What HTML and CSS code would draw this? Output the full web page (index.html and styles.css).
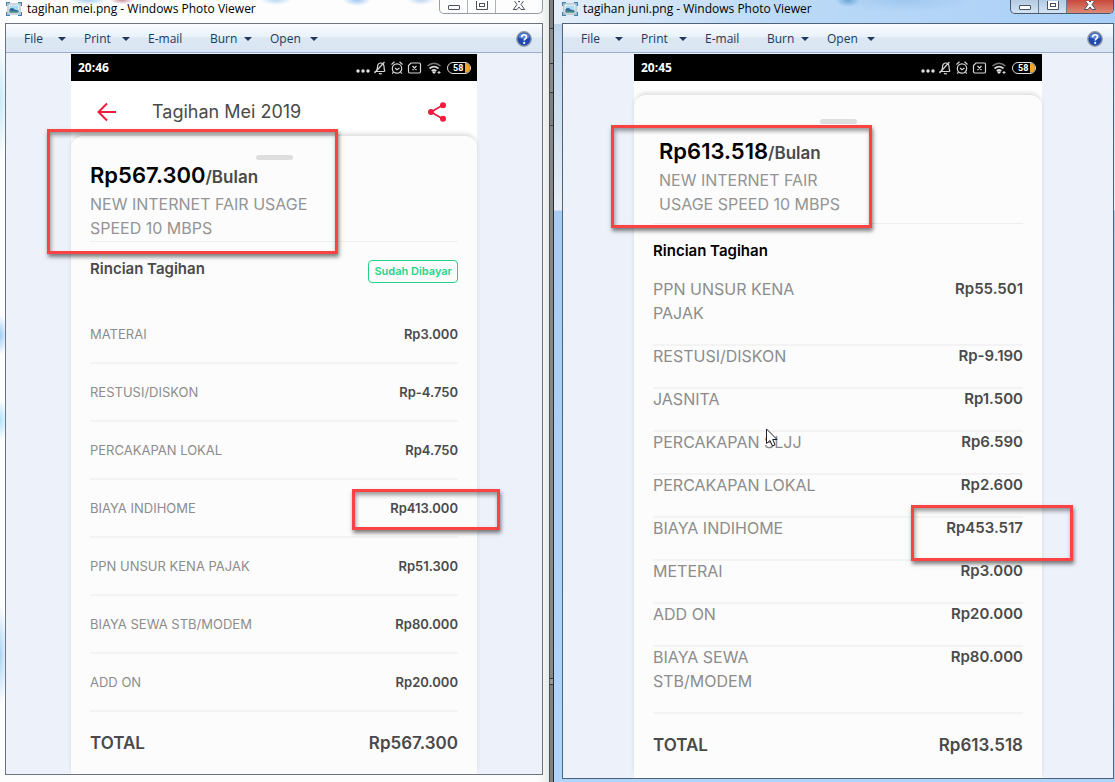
FILE: index.html
```html
<!DOCTYPE html>
<html lang="id">
<head>
<meta charset="utf-8">
<title>Windows Photo Viewer</title>
<link rel="stylesheet" href="styles.css">
</head>
<body>
<svg class="defs" aria-hidden="true">
  <symbol id="photo" viewBox="0 0 16 14">
    <path d="M.5 4V.5H4M12 .5h3.500V4M15.500 10v3.500H12M4 13.500H.5V10" fill="none" stroke="#3d82b5" stroke-width="1.400"/>
    <rect x="2" y="2" width="12" height="10" fill="#fff" stroke="#8494a3" stroke-width=".8"/>
    <rect x="3.500" y="3.500" width="9" height="7" fill="#a9d8f3"/>
    <path d="M3.500 7q3-2 5 .5l4 1v2h-9z" fill="#31699a"/>
    <path d="M3.500 9l9 .5v1h-9z" fill="#4d9a75"/>
  </symbol>
  <symbol id="help" viewBox="0 0 16 16">
    <circle cx="8" cy="8" r="7.200" fill="#2148ad" stroke="#8f98a6" stroke-width="1.400"/>
    <path d="M2.500 6.500a5.700 5.700 0 0 1 11 0q-5 2.500-11 0z" fill="#5e8ae0"/>
    <path d="M5.700 6.200c0-3.300 4.800-3.100 4.800-.2 0 1.700-2.300 1.700-2.300 3.600" fill="none" stroke="#fff" stroke-width="1.600"/>
    <circle cx="8.200" cy="11.900" r="1.100" fill="#fff"/>
  </symbol>
  <symbol id="min" viewBox="0 0 14 12"><rect x="1.500" y="4.500" width="11" height="4" rx=".5" fill="#fff" stroke="#4a5262"/></symbol>
  <symbol id="max" viewBox="0 0 14 12"><path d="M1.500-1h11v9.500h-11z" fill="#fff" stroke="#4a5262"/><rect x="4.500" y="2.500" width="5" height="3" fill="#fff" stroke="#4a5262"/></symbol>
  <symbol id="close" viewBox="0 0 14 12"><path d="M1.500-1.500h3.500L7 1.200 9-1.500h3.500L9 3.500l3.700 5H9L7 6 5 8.500H1.300L5 3.500z" fill="#fff" stroke="#4a5262"/></symbol>
  <symbol id="status" viewBox="0 0 88 16">
    <g fill="#e4e4e4"><circle cx="3" cy="11" r="1.700"/><circle cx="8" cy="11" r="1.700"/><circle cx="13" cy="11" r="1.700"/></g>
    <g fill="none" stroke="#d6d6d6" stroke-width="1.200">
      <path d="M19.500 11.500h10M21 11q1.500-1 1.500-4 0-4 3.500-4 2.500 0 3 3 0 4 1 5.500M24 13.300q1.500 1.300 2.800 0M19.500 13L29.500 2"/>
      <circle cx="42" cy="8.500" r="4.700"/><path d="M36.500 4.500l3-2.700M47.500 4.500l-3-2.700M40 8l2 1.700L44.500 8M38.500 12l-1.300 1.700M45.500 12l1.300 1.700"/>
      <path d="M56 3h8.300q1.200 0 1.200 1.200v7.600q0 1.200-1.200 1.200H54.700q-1.200 0-1.200-1.200V5.500zM57.500 6l4 4M61.500 6l-4 4"/>
      <path d="M72.500 6q6.500-5.500 13 0" stroke="#777" stroke-width="1.600"/><path d="M74.500 8.500q4.500-3.800 9 0M76.700 11q2.300-2 4.600 0" stroke-width="1.700"/>
      <path d="M84 11v3M82.500 12.500h3" stroke-width="1"/>
    </g>
    <path d="M79 14l-2-2q2-1.500 4 0z" fill="#e4e4e4"/>
  </symbol>
</svg>

<main class="desktop">
  <section class="window window-back">
    <header class="titlebar">
      <svg class="app-icon"><use href="#photo"/></svg>
      <h1>tagihan mei.png - Windows Photo Viewer</h1>
      <div class="controls">
        <button aria-label="Minimize"><svg><use href="#min"/></svg></button>
        <button aria-label="Maximize"><svg><use href="#max"/></svg></button>
        <button class="close" aria-label="Close"><svg><use href="#close"/></svg></button>
      </div>
    </header>
    <div class="viewer">
      <nav class="toolbar">
        <button class="drop">File</button><button class="drop">Print</button><button class="plain">E-mail</button><button class="drop">Burn</button><button class="drop">Open</button>
        <button class="help" aria-label="Help"><svg><use href="#help"/></svg></button>
      </nav>
      <div class="stage">
        <article class="phone mei">
          <div class="statusbar"><time>20:46</time><svg><use href="#status"/></svg><span class="battery">58</span></div>
          <div class="appbar">
            <button aria-label="Kembali"><svg viewBox="0 0 20 20"><path d="M19 10H2M10 1.500L1.500 10l8.500 8.500" fill="none" stroke="#ee1c3b" stroke-width="2"/></svg></button>
            <h2>Tagihan Mei 2019</h2>
            <button aria-label="Bagikan"><svg viewBox="0 0 20 20"><path d="M16 3L4 10l12 7" fill="none" stroke="#ee1c3b" stroke-width="1.700"/><g fill="#ee1c3b"><circle cx="16" cy="3.200" r="3"/><circle cx="4" cy="10" r="3"/><circle cx="16" cy="16.800" r="3"/></g></svg></button>
          </div>
          <div class="card">
            <div class="handle"></div>
            <div class="plan">
              <p class="price"><strong>Rp567.300</strong>/Bulan</p>
              <p class="package">NEW INTERNET FAIR USAGE SPEED 10 MBPS</p>
              <i class="mark mark-plan"></i>
            </div>
            <div class="detail-head"><h3>Rincian Tagihan</h3><span class="badge">Sudah Dibayar</span></div>
            <dl class="bill">
              <div><dt>MATERAI</dt><dd>Rp3.000</dd></div>
              <div><dt>RESTUSI/DISKON</dt><dd>Rp-4.750</dd></div>
              <div><dt>PERCAKAPAN LOKAL</dt><dd>Rp4.750</dd></div>
              <div><dt>BIAYA INDIHOME</dt><dd>Rp413.000</dd><i class="mark mark-row"></i></div>
              <div><dt>PPN UNSUR KENA PAJAK</dt><dd>Rp51.300</dd></div>
              <div><dt>BIAYA SEWA STB/MODEM</dt><dd>Rp80.000</dd></div>
              <div><dt>ADD ON</dt><dd>Rp20.000</dd></div>
              <div class="total"><dt>TOTAL</dt><dd>Rp567.300</dd></div>
            </dl>
          </div>
        </article>
      </div>
    </div>
  </section>

  <div class="gap"></div>

  <section class="window window-front">
    <header class="titlebar">
      <svg class="app-icon"><use href="#photo"/></svg>
      <h1>tagihan juni.png - Windows Photo Viewer</h1>
      <div class="controls">
        <button aria-label="Minimize"><svg><use href="#min"/></svg></button>
        <button aria-label="Maximize"><svg><use href="#max"/></svg></button>
        <button class="close" aria-label="Close"><svg><use href="#close"/></svg></button>
      </div>
    </header>
    <div class="viewer">
      <nav class="toolbar">
        <button class="drop">File</button><button class="drop">Print</button><button class="plain">E-mail</button><button class="drop">Burn</button><button class="drop">Open</button>
        <button class="help" aria-label="Help"><svg><use href="#help"/></svg></button>
      </nav>
      <div class="stage">
        <article class="phone juni">
          <div class="statusbar"><time>20:45</time><svg><use href="#status"/></svg><span class="battery">58</span></div>
          <div class="card">
            <div class="handle"></div>
            <div class="plan">
              <p class="price"><strong>Rp613.518</strong>/Bulan</p>
              <p class="package">NEW INTERNET FAIR USAGE SPEED 10 MBPS</p>
              <i class="mark mark-plan"></i>
            </div>
            <div class="detail-head"><h3>Rincian Tagihan</h3></div>
            <dl class="bill">
              <div><dt>PPN UNSUR KENA PAJAK</dt><dd>Rp55.501</dd></div>
              <div><dt>RESTUSI/DISKON</dt><dd>Rp-9.190</dd></div>
              <div><dt>JASNITA</dt><dd>Rp1.500</dd></div>
              <div><dt>PERCAKAPAN SLJJ</dt><dd>Rp6.590</dd>
                <svg class="cursor" viewBox="0 0 12 19"><path d="M.5 1v14.500l3.500-3 2.500 5.500 2.500-1.200L6.700 11.500H11z" fill="#fff" stroke="#1b1b2b"/></svg></div>
              <div><dt>PERCAKAPAN LOKAL</dt><dd>Rp2.600</dd></div>
              <div><dt>BIAYA INDIHOME</dt><dd>Rp453.517</dd><i class="mark mark-row"></i></div>
              <div><dt>METERAI</dt><dd>Rp3.000</dd></div>
              <div><dt>ADD ON</dt><dd>Rp20.000</dd></div>
              <div><dt>BIAYA SEWA STB/MODEM</dt><dd>Rp80.000</dd></div>
              <div class="total"><dt>TOTAL</dt><dd>Rp613.518</dd></div>
            </dl>
          </div>
        </article>
      </div>
    </div>
  </section>
</main>
</body>
</html>
```
FILE: styles.css
```css
* { box-sizing: border-box; }
body, h1, h2, h3, p, dl, dd { margin: 0; }
body { font-family: Inter, "Noto Sans", sans-serif; background: #fff; }
button { border: 0; padding: 0; background: none; font: inherit; color: inherit; }
.defs { position: absolute; width: 0; height: 0; }

.desktop { display: grid; grid-template-columns: 549fr 5px 561fr; min-height: 100vh; overflow: hidden; }
.gap {
  border-left: 1px solid #555;
  border-right: 1px solid #222a33;
  background: linear-gradient(#808080 0 28px, #333 28px 29px, #8b8b8b 29px 63px, #333 63px 64px, #8a8a8a 64px 92px, #333 92px 93px, #7b8085 93px 125px, #444 125px 126px, #858585 126px 678px, #333 678px 679px, #999 679px 684px, #333 684px 685px, #808080 685px);
}

.window { display: flex; flex-direction: column; min-width: 0; }
.window-back {
  padding: 0 6px 8px 5px;
  background:
    radial-gradient(ellipse 20px 5px at 88px 0, #a9cfee, transparent),
    radial-gradient(ellipse 12px 4px at 122px 0, #c98c9a, transparent),
    radial-gradient(ellipse 16px 5px at 276px 0, #bcd6f2, transparent),
    radial-gradient(ellipse 14px 6px at 357px 0, #9fc8f2, transparent),
    radial-gradient(ellipse 14px 5px at 421px 0, #bdd5f2, transparent),
    radial-gradient(ellipse 8px 20px at 0 335px, #9ccdf5, transparent),
    radial-gradient(ellipse 8px 60px at 0 100px, #c6e9f8, transparent),
    radial-gradient(ellipse 8px 20px at 0 420px, #aee3fa, transparent),
    radial-gradient(ellipse 8px 50px at 0 655px, #a9d4f3, transparent),
    linear-gradient(90deg, #fdfdfd 98%, #e8eaea);
}
.window-front {
  padding: 0 1px 4px 8px;
  background:
    radial-gradient(ellipse 12px 7px at 294px 0, #6aa7d8, transparent),
    radial-gradient(ellipse 70px 12px at 350px 0, #9fc8ef, transparent),
    linear-gradient(90deg, #e4eef9, #bcdaf7 40%, #a9cff7) 0 0 / 100% 24px no-repeat,
    linear-gradient(#b8d2ec, #d4e2f0 130px, #e8eff8 210px, #a9cdf2 211px, #b0d5fa);
}
.titlebar { display: flex; height: 23px; padding-left: 1px; gap: 5px; }
.window-front .titlebar { padding-left: 0; }
.app-icon { width: 16px; height: 14px; margin-top: 2px; }
.titlebar h1 { flex: 1; font: 400 12px/18px "Open Sans", sans-serif; color: #000; white-space: nowrap; }
.controls { display: flex; height: 14px; border: 1px solid #929da8; border-top: 0; border-radius: 0 0 5px 5px; overflow: hidden; }
.controls button { width: 28px; padding-top: 1px; display: flex; justify-content: center; border-right: 1px solid #a9b1b9; }
.controls button.close { width: 46px; border: 0; }
.controls svg { width: 14px; height: 12px; }
.window-front .controls { border-color: #49586b; background: linear-gradient(#b4cbe2, #d2e3f4); }
.window-front .controls button { border-color: #6a7c90; }
.window-front .controls .close { background: linear-gradient(#c8493a, #dd8a76); }

.viewer { flex: 1; display: flex; flex-direction: column; border: 1px solid #6c737d; }
.window-front .viewer { border-color: #4f6278; }
.toolbar {
  display: flex; align-items: center; height: 29px; padding: 1px 10px 0 18px;
  font: 400 12px/16px "Open Sans", sans-serif; color: #1e395b;
  background: linear-gradient(#fafcfe, #e9f1fa 45%, #dce7f4 50%, #dbe6f4);
  border-bottom: 1px solid #9aaed0;
}
.drop { display: flex; justify-content: space-between; align-items: center; width: 60px; padding-right: 18px; }
.drop::after { content: ""; border: 4px solid transparent; border-top-color: #1e395b; border-bottom: 0; }
.drop:nth-child(2) { width: 64px; }
.drop:nth-child(5) { width: 66px; }
.plain { width: 62px; text-align: left; }
.help { margin-left: auto; }
.help svg, .help { display: block; width: 16px; height: 16px; }

.stage { flex: 1; display: flex; padding: 1px 65px 0; background: #edf1fa; }
.window-front .stage { padding: 1px 71px 0; }
.phone { flex: 1; min-width: 0; display: flex; flex-direction: column; background: #fff; color: #4a4a4a; }
.statusbar { display: flex; align-items: center; gap: 4px; height: 27px; padding: 0 6px 0 7px; background: #000; color: #fff; font: 700 12px/16px "Open Sans", sans-serif; }
.statusbar svg { width: 88px; height: 16px; margin-left: auto; }
.battery {
  width: 24px; height: 12px; padding-left: 5px; border: 1px solid #ddd; border-radius: 6px;
  background: linear-gradient(90deg, #000 17px, #f2a42b 17px) padding-box;
  font: 700 9px/10px Roboto, sans-serif;
}
.appbar { display: flex; align-items: center; height: 55px; padding: 6px 30px 0 26px; }
.appbar button, .appbar svg { display: block; width: 20px; height: 20px; }
.appbar h2 { flex: 1; padding-left: 35px; font: 400 18px/24px Inter, sans-serif; }

.card { flex: 1; padding: 19px 19px 0; border-radius: 12px 12px 0 0; background: #fcfcfc; box-shadow: 0 -3px 5px -1px rgba(0, 0, 0, .15); }
.juni .card { margin-top: 14px; padding-top: 24px; }
.handle { width: 37px; height: 5px; margin: 0 auto; border-radius: 3px; background: #dedede; }
.plan { position: relative; border-bottom: 1px solid #eee; height: 82px; }
.price { font-size: 17px; line-height: 30px; font-weight: 600; }
.price strong { font-size: 22px; font-weight: 600; color: #000; }
.package { width: 240px; font-size: 16px; line-height: 24px; color: #949494; }
.juni .plan { height: 100px; padding: 12px 0 0 6px; }
.juni .package { width: 190px; }
.detail-head { display: flex; justify-content: space-between; height: 64px; padding-top: 15px; }
.detail-head h3 { font: 600 15px/24px Inter, sans-serif; }
.badge { height: 23px; margin-top: 3px; padding: 0 5px; border: 1px solid #22d58b; border-radius: 4px; font-size: 11px; line-height: 20px; font-weight: 600; color: #22d58b; }
.juni .detail-head { height: 55px; }
.juni .detail-head h3 { color: #000; }

.bill > div { position: relative; display: flex; justify-content: space-between; align-items: center; min-height: 58px; border-bottom: 2px solid #f3f3f3; font-size: 13px; line-height: 24px; }
.bill dt { color: #8c8c8c; }
.bill dd { font-weight: 600; }
.bill > .total { min-height: 62px; border: 0; font-size: 17px; }
.total dt, .total dd { color: #4a4a4a; font-weight: 600; }
.juni .bill > div { align-items: flex-start; min-height: 43px; padding-bottom: 19px; font-size: 16px; }
.juni .bill dt, .juni .bill dd { margin-top: -2px; }
.juni .bill dt { max-width: 180px; }
.juni .bill dd { font-size: 15px; }
.juni .bill > .total { min-height: 62px; padding: 21px 0; }
.juni .bill .total dt, .juni .bill .total dd { font-size: 17px; }

.mark { position: absolute; border: 3px solid #fb4343; box-shadow: 1px 3px 4px rgba(0, 0, 0, .5), inset 1px 3px 4px rgba(0, 0, 0, .4); }
.mei .mark-plan { left: -43px; top: -31px; width: 291px; height: 125px; }
.mei .mark-row { right: -42px; top: 9px; width: 148px; height: 41px; }
.juni .mark-plan { left: -42px; top: 1px; width: 261px; height: 103px; }
.juni .mark-row { right: -50px; top: -13px; width: 162px; height: 56px; }
.cursor { position: absolute; left: 113px; top: -4px; width: 12px; height: 19px; }
```
